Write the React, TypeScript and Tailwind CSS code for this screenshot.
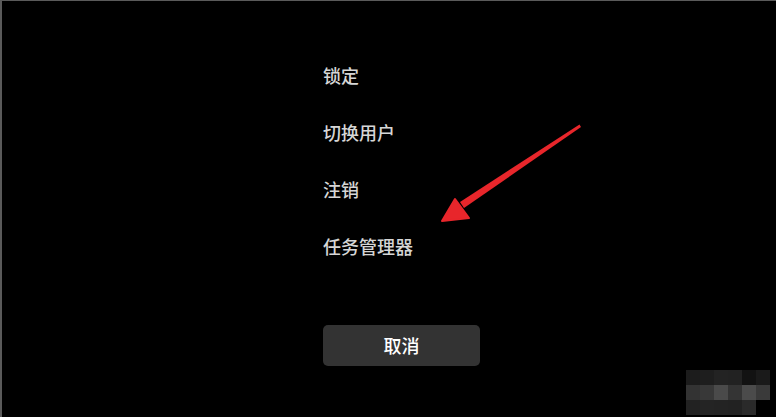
const items = ["锁定", "切换用户", "注销", "任务管理器"];

const mosaic = [
  ["#1c1c1c", "#1e1e1e", "#232323", "#222222", "#121212", "#1a1a1a"],
  ["#333333", "#383838", "#4a4a4a", "#343434", "#4b4b4b", "#3a3a3a"],
  ["#222222", "#242424", "#232323", "#222222", "#2a2a2a", ""],
];

export default function App() {
  return (
    <div
      className="relative w-[776px] h-[417px] overflow-hidden bg-black border-t border-l-2 border-[#5a5a5a]"
      style={{ fontFamily: '"Noto Sans CJK SC", "Noto Sans", sans-serif' }}
    >
      <div className="flex flex-col items-start pl-[321px] pt-[62px]">
        <ul className="flex flex-col gap-[33px]">
          {items.map((t) => (
            <li key={t} className="text-[18px] leading-[24px] font-medium text-[#d6d6d6]">
              {t}
            </li>
          ))}
        </ul>
        <button className="mt-[67px] w-[157px] h-[41px] rounded-[5px] bg-[#333333] text-[18px] font-medium text-white">
          取消
        </button>
      </div>

      {/* red arrow annotation */}
      <svg
        className="absolute left-[430px] top-[115px]"
        width="160"
        height="120"
        viewBox="0 0 160 120"
      >
        <path d="M147.5 8.5 L149 11 L32 92 L28 86 Z" fill="#e8262b" />
        <path d="M10 105 L23 83 L37 102 Z" fill="#e8262b" stroke="#e8262b" strokeWidth="2" strokeLinejoin="round" />
      </svg>

      {/* mosaic watermark */}
      <div className="absolute left-[684px] top-[369px] flex flex-col">
        {mosaic.map((row, i) => (
          <div key={i} className="flex">
            {row.map((c, j) => (
              <div
                key={j}
                className="w-[14px] h-[15px]"
                style={{ backgroundColor: c || "transparent" }}
              />
            ))}
          </div>
        ))}
      </div>
    </div>
  );
}
